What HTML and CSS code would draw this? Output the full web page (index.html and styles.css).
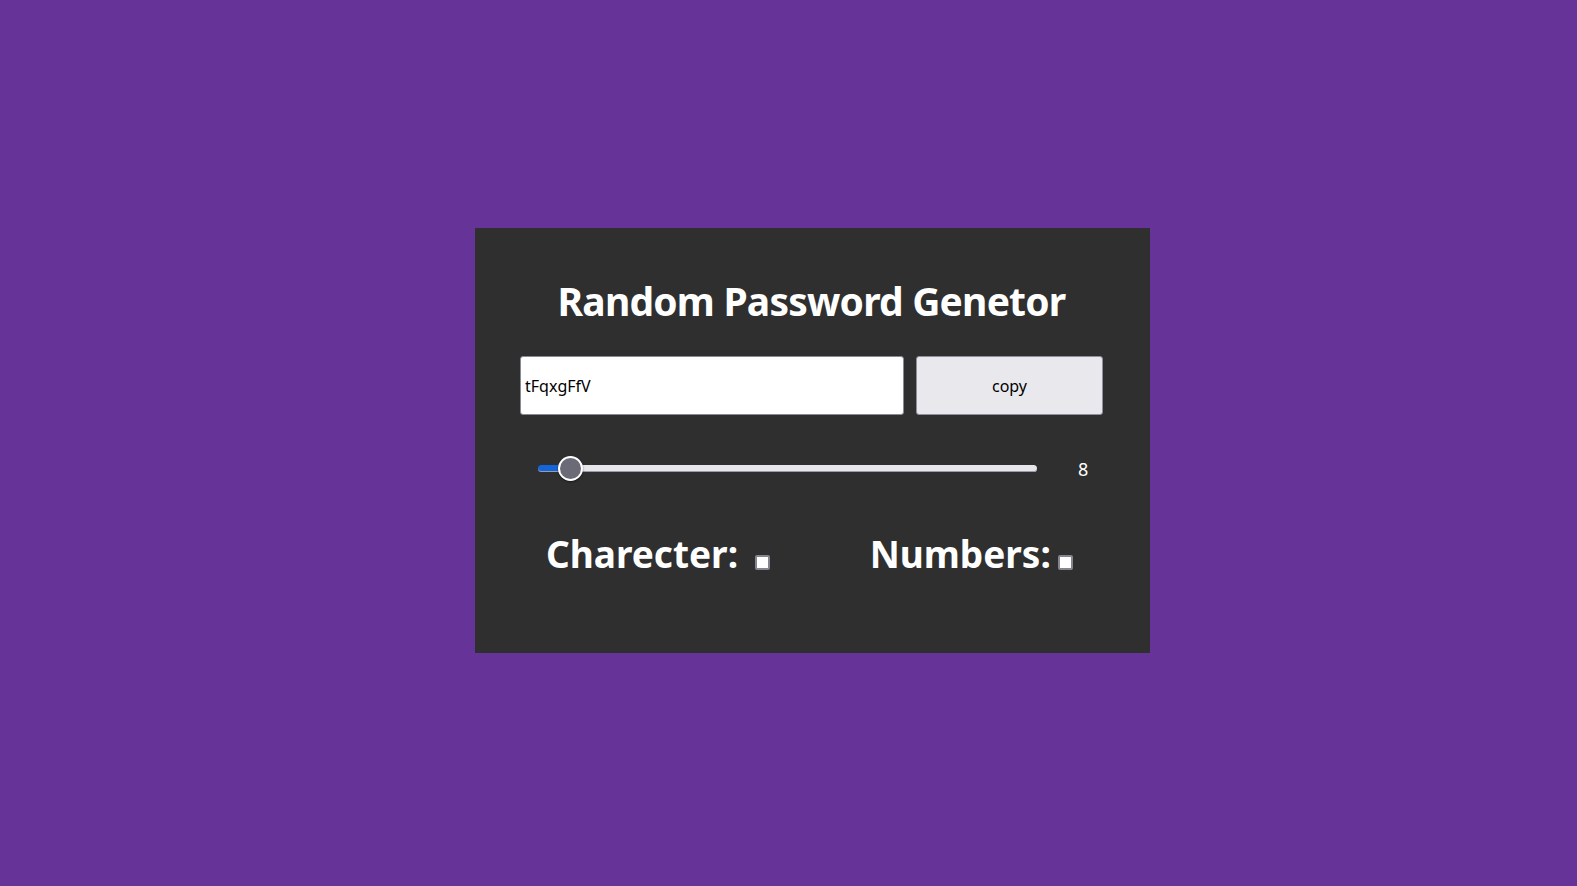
FILE: index.html
```html
<!DOCTYPE html>
<html lang="en">
<head>
<meta charset="utf-8">
<title>Random Password Genetor</title>
<link rel="stylesheet" href="styles.css">
</head>
<body>
<main class="page">
  <section class="card">
    <h1 class="title">Random Password Genetor</h1>
    <div class="output-row">
      <input class="password" type="text" value="tFqxgFfV" readonly>
      <button class="copy-btn" type="button">copy</button>
    </div>
    <div class="length-row">
      <input class="length" type="range" min="4" max="100" value="8" style="--fill: 6.6%">
      <span class="length-value">8</span>
    </div>
    <div class="options-row">
      <label class="option">Charecter: <input class="check" type="checkbox"></label>
      <label class="option">Numbers:<input class="check" type="checkbox"></label>
    </div>
  </section>
</main>
</body>
</html>
```

FILE: styles.css
```css
* { box-sizing: border-box; }

html, body {
  margin: 0;
  height: 100%;
}

body {
  background: #663399;
  font-family: "Noto Sans", "Open Sans", sans-serif;
  color: #ffffff;
}

.page {
  height: 100%;
  display: flex;
  justify-content: center;
  align-items: flex-start;
  padding-left: 48px;
  padding-top: 228px;
}

.card {
  width: 675px;
  height: 425px;
  background: #2f2f2f;
  padding: 45px 47px 0 45px;
  display: flex;
  flex-direction: column;
}

.title {
  margin: 0;
  font-size: 39px;
  line-height: 56px;
  font-weight: 700;
  text-align: center;
  letter-spacing: -0.8px;
}

.output-row {
  margin-top: 27px;
  display: flex;
  gap: 12px;
  height: 59px;
}

.password {
  width: 384px;
  height: 59px;
  margin: 0;
  border: 1px solid #8a8a96;
  border-radius: 3px;
  background: #ffffff;
  color: #000000;
  font-family: "Noto Sans", "Open Sans", sans-serif;
  font-size: 16px;
  padding: 0 4px;
  outline: none;
}

.copy-btn {
  width: 187px;
  height: 59px;
  margin: 0;
  border: 1px solid #8f8f9d;
  border-radius: 3px;
  background: #e9e9ed;
  color: #000000;
  font-family: "Noto Sans", "Open Sans", sans-serif;
  font-size: 16px;
  padding: 0;
}

.length-row {
  margin-top: 41px;
  display: flex;
  align-items: center;
  height: 25px;
}

.length {
  -webkit-appearance: none;
  appearance: none;
  margin: 0 0 0 18px;
  width: 499px;
  height: 25px;
  background: transparent;
}

.length::-webkit-slider-runnable-track {
  height: 7px;
  border-radius: 4px;
  background: linear-gradient(to right, #1464db 0, #1464db var(--fill), #e6e6eb var(--fill), #e6e6eb 100%);
  box-shadow: inset 0 -1px 0 #9c9ca6;
}

.length::-webkit-slider-thumb {
  -webkit-appearance: none;
  appearance: none;
  width: 25px;
  height: 25px;
  margin-top: -9px;
  border-radius: 50%;
  background: #6b6b78;
  border: 2px solid #ffffff;
  box-shadow: 0 1px 2px rgba(0, 0, 0, 0.5);
}

.length-value {
  margin-left: 41px;
  font-size: 18px;
  line-height: 25px;
  position: relative;
  top: 1px;
}

.options-row {
  margin-top: 47px;
  display: flex;
  padding-left: 26px;
  gap: 100px;
}

.option {
  font-size: 37px;
  font-weight: 700;
  line-height: 52px;
  white-space: pre;
}

.check {
  -webkit-appearance: none;
  appearance: none;
  width: 15px;
  height: 15px;
  margin: 0 0 0 7px;
  background: #ffffff;
  border: 2px solid #85858f;
  border-radius: 2px;
  vertical-align: -2px;
}
```
